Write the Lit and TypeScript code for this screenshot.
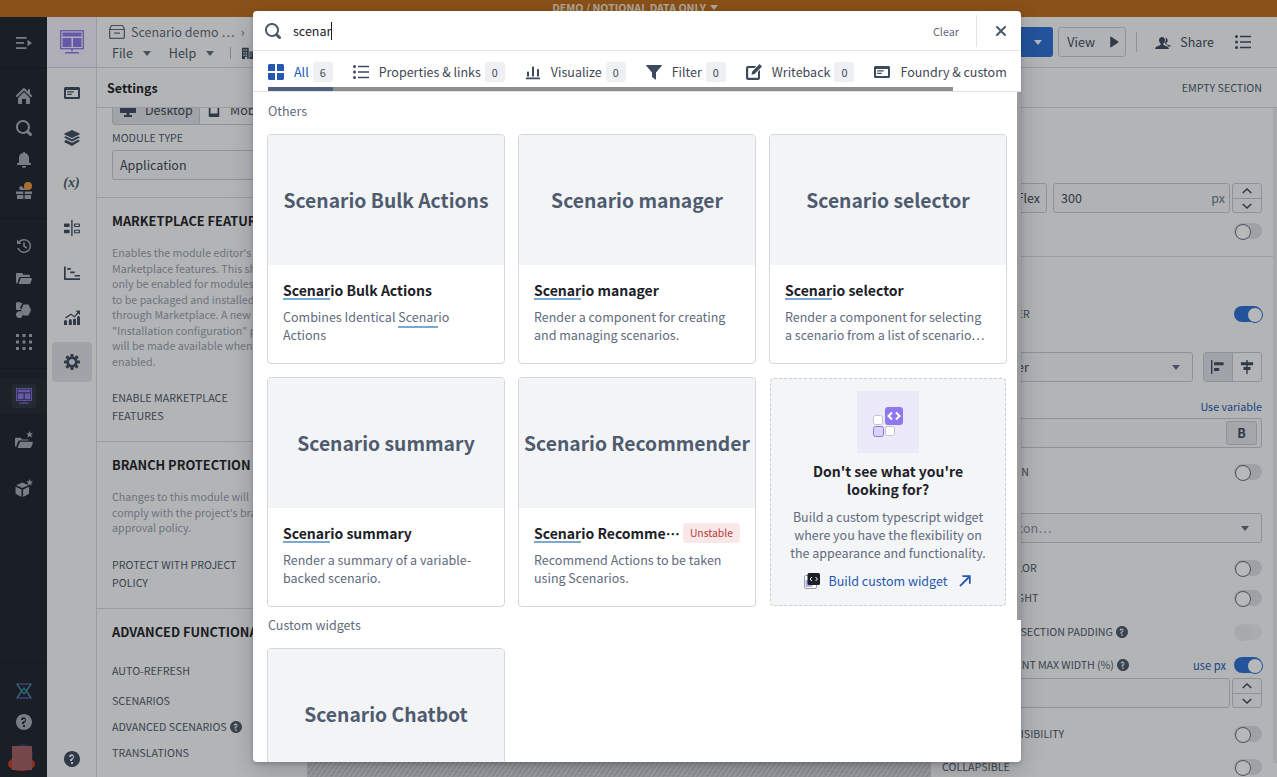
import { LitElement, html, css, nothing } from "lit";
import { customElement } from "lit/decorators.js";

const P: Record<string, string> = {
  search: "M15.55 13.43l-2.67-2.68a6.94 6.94 0 001.11-3.76c0-3.87-3.13-7-7-7s-7 3.13-7 7 3.13 7 7 7c1.39 0 2.68-.42 3.76-1.11l2.68 2.67a1.498 1.498 0 102.12-2.12zm-8.56-1.44c-2.76 0-5-2.24-5-5s2.24-5 5-5 5 2.24 5 5-2.24 5-5 5z",
  home: "M2 10v5c0 .55.45 1 1 1h3v-5h4v5h3c.55 0 1-.45 1-1v-5L8 4l-6 6zm13.71-2.71L14 5.58V2c0-.55-.45-1-1-1s-1 .45-1 1v1.58L8.71.29C8.53.11 8.28 0 8 0s-.53.11-.71.29l-7 7a1.003 1.003 0 001.42 1.42L8 2.41l6.29 6.29c.18.19.43.3.71.3a1.003 1.003 0 00.71-1.71z",
  bell: "M8 16c1.1 0 2-.9 2-2H6c0 1.1.9 2 2 2zm6-5c-.55 0-1-.45-1-1V6c0-2.43-1.73-4.45-4.02-4.9 0-.04.02-.06.02-.1 0-.55-.45-1-1-1S7 .45 7 1c0 .04.02.06.02.1A4.992 4.992 0 003 6v4c0 .55-.45 1-1 1s-1 .45-1 1 .45 1 1 1h12c.55 0 1-.45 1-1s-.45-1-1-1z",
  help: "M8 0C3.58 0 0 3.58 0 8s3.58 8 8 8 8-3.58 8-8-3.58-8-8-8zM7 13h2v-2H7v2zm1-10C6.34 3 5 4.34 5 6h2c0-.55.45-1 1-1s1 .45 1 1c0 .28-.11.53-.3.7L6.47 7.94c-.36.36-.47.86-.47 1.06v1h2V9.5c.02-.15.1-.3.2-.4l.97-.98c.45-.45.83-1.12.83-2.12 0-1.66-1.34-3-3-3z",
  cog: "M15.19 6.39h-1.85c-.11-.37-.27-.71-.45-1.04l1.36-1.36c.31-.31.31-.82 0-1.13l-1.13-1.13a.803.803 0 00-1.13 0l-1.36 1.36c-.33-.18-.67-.33-1.04-.44V.79c0-.44-.36-.8-.8-.8h-1.6c-.44 0-.8.36-.8.8v1.86c-.39.12-.75.28-1.1.47l-1.3-1.3c-.3-.3-.79-.3-1.09 0L1.82 2.91c-.3.3-.3.79 0 1.09l1.3 1.3c-.2.35-.36.71-.48 1.1H.8c-.44 0-.8.36-.8.8v1.6c0 .44.36.8.8.8h1.85c.11.37.27.71.45 1.04l-1.36 1.36c-.31.31-.31.82 0 1.13l1.13 1.13c.31.31.82.31 1.13 0l1.36-1.36c.33.18.67.33 1.04.44v1.86c0 .44.36.8.8.8h1.6c.44 0 .8-.36.8-.8v-1.86c.39-.12.75-.28 1.1-.47l1.3 1.3c.3.3.79.3 1.09 0l1.09-1.09c.3-.3.3-.79 0-1.09l-1.3-1.3c.19-.35.36-.71.48-1.1h1.85c.44 0 .8-.36.8-.8v-1.6a.816.816 0 00-.81-.8zm-7.2 4.6c-1.66 0-3-1.34-3-3s1.34-3 3-3 3 1.34 3 3-1.34 3-3 3z",
  allgrid: "M0 1.5C0 .7.7 0 1.5 0H7v7H0zM9 0h5.500c.8 0 1.500.7 1.500 1.500V7H9zM0 9h7v7H1.500C.7 16 0 15.300 0 14.500zm9 0h7v5.500c0 .8-.7 1.500-1.500 1.500H9z",
  list: "M1.500 1a1.500 1.500 0 110 3 1.500 1.500 0 010-3zm0 5.500a1.500 1.500 0 110 3 1.500 1.500 0 010-3zm0 5.500a1.500 1.500 0 110 3 1.500 1.500 0 010-3zM5 1.700h11v1.600H5zm0 5.500h11v1.600H5zm0 5.500h11v1.600H5z",
  bars: "M1 13.500h14v1.700H1zM2 8.500c0-.6.4-1 1-1s1 .4 1 1v4H2zM7 3.500c0-.6.4-1 1-1s1 .4 1 1v9H7zM12 6c0-.6.4-1 1-1s1 .4 1 1v6.500h-2z",
  filter: "M.5 1h15c.3 0 .5.5.3.8L10 8.500V15c0 .5-.5.6-.8.4l-3-2.400c-.1-.1-.2-.3-.2-.5V8.500L.2 1.800C0 1.500.2 1 .5 1z",
  edit: "M13.600 0L16 2.400 8.600 9.900l-3.200.8.8-3.200zM2 2h8.300L8.400 4H2.200v9.800H12V7.700l2-2V14a2 2 0 01-2 2H2a2 2 0 01-2-2V4a2 2 0 012-2z",
  panel: "M1.500 2h13c.8 0 1.500.7 1.500 1.500v9c0 .8-.7 1.500-1.500 1.500h-13C.7 14 0 13.300 0 12.500v-9C0 2.700.7 2 1.500 2zM2 5v7h12V5zm1.200 1.300h6.500v1.300H3.200zm0 2.400h4.500V10H3.200z",
  layers: "M8 0l7.500 3.600c.4.2.4.6 0 .8L8 8 .5 4.400c-.4-.2-.4-.6 0-.8zM1.800 6.300L8 9.300l6.200-3 1.300.7c.4.2.4.6 0 .8L8 11.400.5 7.800c-.4-.2-.4-.6 0-.8zm0 3.400L8 12.700l6.200-3 1.300.7c.4.2.4.6 0 .8L8 16 .5 12.200c-.4-.2-.4-.6 0-.8z",
  sliders: "M7.200 0h1.400v16H7.200zM.8 3.500h4c.5 0 .8.3.8.8v1.900c0 .5-.3.8-.8.8h-4c-.5 0-.8-.3-.8-.8V4.300c0-.5.3-.8.8-.8zm0 6.200h4c.5 0 .8.3.8.8v1.900c0 .5-.3.8-.8.8h-4c-.5 0-.8-.3-.8-.8v-1.900c0-.5.3-.8.8-.8zM11 3.500h4c.5 0 1 .4 1 1v1.600c0 .6-.5 1-1 1h-4c-.5 0-1-.4-1-1V4.500c0-.6.5-1 1-1zm.2 1.100v1.400h3.600V4.600zm-.2 5.100h4c.5 0 1 .4 1 1v1.600c0 .6-.5 1-1 1h-4c-.5 0-1-.4-1-1v-1.600c0-.6.5-1 1-1zm.2 1.100v1.400h3.600v-1.400z",
  gantt: "M0 1.500h1.700v11.800H16V15H1c-.6 0-1-.4-1-1zM3.200 3h3.600v1.800H3.200zm3 3.500h4.600v1.800H6.200zm4.500 3.400H16v1.700h-5.300z",
  growth: "M1.500 10A1.500 1.500 0 013 11.500V15H0v-3.500A1.500 1.500 0 011.500 10zm4.800-1a1.500 1.500 0 011.500 1.500V15h-3v-4.500A1.500 1.500 0 016.300 9zm8.200-3A1.500 1.500 0 0116 7.500V15h-3V7.500A1.500 1.500 0 0114.500 6zm-4 2.500A1.500 1.500 0 0112 10v5H9v-5a1.500 1.500 0 011.500-1.500zM16 .5V5l-1.500-1.500-4 4L7 5 2 8.500l-.8-1.200L7 3.500l3.400 2.400 2.900-3.400L11.700.8z",
  history: "M8 1a7 7 0 11-6.700 9h1.600A5.500 5.500 0 108 2.500a5.400 5.400 0 00-4.100 1.900L5.500 6H1V1.500l1.800 1.800A7 7 0 018 1zm-.8 3.500h1.600v3.200l2.500 1.900-1 1.200-3.100-2.400z",
  folder: "M1 3h5l1.500 1.800H13c.6 0 1 .4 1 1V7H4.300c-.6 0-1 .3-1.200.9l-1.900 5.700C.5 13.400 0 12.800 0 12V4c0-.6.4-1 1-1zm3.800 5H15c.7 0 1.100.6.9 1.200l-1.500 4.100c-.2.4-.5.7-1 .7H2.500z",
  cubes: "M4 .5a3.500 3.500 0 012.300.9L4 5.800l1.300 2.200H1A3.500 3.500 0 014 .5zM7.500 2.500h5l2.500 5.500-2.500 5.500h-5L5 8zM4 9.200h1.300L7 12.500l-1 2.600a3.500 3.500 0 11-2-5.900z",
  grid: "M0 0h3v3H0zm6.500 0h3v3h-3zM13 0h3v3h-3zM0 6.500h3v3H0zm6.500 0h3v3h-3zm6.500 0h3v3h-3zM0 13h3v3H0zm6.500 0h3v3h-3zM13 13h3v3h-3z",
  collapse: "M0 2h10.500v1.700H0zm0 5.100h8v1.700H0zm0 5.100h10.500v1.700H0zM11.500 4.800L16 8l-4.500 3.200z",
  share: "M9.800 11.500c-1.300-.5-1.500-1-1.500-1.500 0-.5.3-1 .7-1.300.7-.6 1-1.500 1-2.500 0-1.900-1.200-3.200-3-3.200s-3 1.400-3 3.200c0 1 .4 1.900 1 2.500.4.300.7.800.7 1.300 0 .5-.2 1-1.500 1.500C3 12 .2 12.800 0 15h14c-.2-2.200-3-3-4.200-3.500zm3-.7c-.6-.2-1.500-.9-1.500-1.300 0-.4.3-.7.6-1 .6-.5.9-1.200.9-2 0-1.500-1-2.600-2.400-2.800.6 1 .7 2.500-.1 4-.3.6-.6.9-.6 1.200 0 .8 2.400 1.500 3.800 3.600H16c0-1-1.300-1.300-3.200-1.700z",
  play: "M3 1.500c0-.6.7-1 1.200-.6l9.500 6.400c.4.3.4 1 0 1.300l-9.500 6.500c-.5.3-1.200 0-1.200-.6z",
  building: "M0 1h9v15H7v-3H4v3H0zm2 2v2h1.500V3zm3 0v2h1.500V3zM2 6.500v2h1.500v-2zm3 0v2h1.500v-2zM2 10v2h1.500v-2zm3 0v2h1.500v-2zM10 6h6v10h-6zm1.500 1.500v2h1.300v-2zm0 3.500v2h1.300v-2z",
  gift: "M0 7.500h7.300V10H0zm8.700 0H16V10H8.700zM1 11h6.300v4H1zm7.700 0H15v4H8.700zM4 2.500C5.500 1.500 7 2.800 8 5c1-2.200 2.500-3.500 4-2.500 1.300.9.900 2.800-.6 3.600H4.600C3.100 5.300 2.700 3.400 4 2.500z",
  folderstar: "M1 6h4l1.500 1.500H12v1H4c-.6 0-1 .3-1.200.8L1 14c-.6-.1-1-.6-1-1.200V7c0-.6.4-1 1-1zm3.500 3.500H15c.7 0 1 .6.8 1.200l-1.300 3.600c-.2.4-.5.7-1 .7H2.200zM13 0l.9 2 2.100.2-1.600 1.400.5 2.100L13 4.600l-1.900 1.100.5-2.100L10 2.200l2.100-.2z",
  cubestar: "M6.500 3L12 5.500 6.500 8.100 1 5.500zM.5 6.800l5.300 2.500V16L.5 13.200zm12 0v6.400L7.200 16V9.300zM13 0l.9 2 2.100.2-1.600 1.400.5 2.100L13 4.600l-1.900 1.100.5-2.100L10 2.200l2.100-.2z",
  appbox: "M2 1h12l2 4v8.500c0 .8-.7 1.500-1.500 1.500h-13C.7 15 0 14.300 0 13.500V5zm.8 1L1.400 5h13.200l-1.400-3zM1.300 6v7.700h13.400V6zM5 8.500h6v1.200H5z",
  monitor: "M1 0h14c.6 0 1 .4 1 1v9c0 .6-.4 1-1 1H9.500v2H12v2H4v-2h2.500v-2H1c-.6 0-1-.4-1-1V1c0-.6.4-1 1-1z",
  mobile: "M3.500 0h9c.8 0 1.500.7 1.500 1.500v13c0 .8-.7 1.500-1.500 1.500h-9C2.700 16 2 15.300 2 14.500v-13C2 .7 2.700 0 3.500 0zM4 2v10h8V2z",
  alignl: "M0 0h1.600v16H0zM3.500 2.500h10c.6 0 1 .4 1 1V5c0 .6-.4 1-1 1h-10zm0 6.500h5c.6 0 1 .4 1 1v1.500c0 .6-.4 1-1 1h-5z",
  alignc: "M7.200 0h1.600v2.500H15V6H8.800v2H12v3.500H8.800V16H7.200v-4.500H4V8h3.200V6H1V2.500h6.200z",
  cross: "M9.410 8l3.290-3.290A1 1 0 1011.290 3.300L8 6.590 4.710 3.300A1 1 0 103.300 4.710L6.590 8 3.300 11.290a1 1 0 101.410 1.410L8 9.410l3.290 3.290a1 1 0 001.410-1.410z",
  arrow: "M5 1.500h9.500V11h-2V5L3 14.500 1.500 13 11 3.500H5z",
  chevup: "M8 4.500l5.500 5.200-1.200 1.200L8 6.900l-4.300 4-1.200-1.200z",
  chevdown: "M8 11.500L2.500 6.300l1.200-1.200L8 9.100l4.300-4 1.200 1.200z",
};

const ic = (name: string, size = 16) =>
  html`<svg class="ic" viewBox="0 0 16 16" width=${size} height=${size} aria-hidden="true">
    <path fill-rule="evenodd" d=${P[name]}></path>
  </svg>`;

// l'icône "module" : écran violet à panneaux, utilisée dans les deux rails
const moduleIcon = (w: number, h: number) =>
  html`<svg viewBox="0 0 24 24" width=${w} height=${h} aria-hidden="true">
    <rect x="0.7" y="0.7" width="22.6" height="18" fill="none" stroke="#8a74e8" stroke-width="1.3"></rect>
    <rect x="2.5" y="2.5" width="19" height="4" fill="#8a74e8"></rect>
    <rect x="2.5" y="8" width="9" height="9" fill="#8a74e8"></rect>
    <rect x="13" y="8" width="8.5" height="9" fill="#8a74e8"></rect>
    <path d="M12 19v2.500M5 22.700h14" stroke="#8a74e8" stroke-width="1.5" fill="none"></path>
  </svg>`;

const caretDown = () => html`<span class="tri"></span>`;
const hl = (s: string) => html`<span class="hl">${s}</span>`;

type Card = { name: string; rest: string; desc: unknown; badge?: string };

const CARDS: Card[] = [
  { name: "Scenario Bulk Actions", rest: "io Bulk Actions", desc: html`Combines Identical <span class="hl-d">Scenar</span>io Actions` },
  { name: "Scenario manager", rest: "io manager", desc: "Render a component for creating and managing scenarios." },
  { name: "Scenario selector", rest: "io selector", desc: "Render a component for selecting a scenario from a list of scenario…" },
  { name: "Scenario summary", rest: "io summary", desc: "Render a summary of a variable-backed scenario." },
  { name: "Scenario Recommender", rest: "io Recommender", desc: "Recommend Actions to be taken using Scenarios.", badge: "Unstable" },
];

const TABS = [
  { label: "Properties & links", icon: "list", n: 0 },
  { label: "Visualize", icon: "bars", n: 0 },
  { label: "Filter", icon: "filter", n: 0 },
  { label: "Writeback", icon: "edit", n: 0 },
  { label: "Foundry & custom", icon: "panel", n: null },
];

@customElement("app-root")
export class AppRoot extends LitElement {
  static styles = css`
    :host {
      display: block;
      position: relative;
      width: 1277px;
      height: 777px;
      overflow: hidden;
      background: #f9fafb;
      color: #1c2127;
      font: 12.5px/18px "Noto Sans CJK SC", "Noto Sans", sans-serif;
    }
    * { box-sizing: border-box; }
    .ic { display: block; fill: currentColor; flex: none; }

    .banner {
      height: 17px;
      background: #bf6c19;
      color: #f6e5cf;
      font-size: 10.6px;
      font-weight: 600;
      line-height: 15px;
      display: flex;
      justify-content: center;
      align-items: flex-start;
      gap: 4px;
      padding-right: 7px;
    }
    .banner .tri { border-top-color: #f6e5cf; margin-top: 5px; }
    .tri {
      display: inline-block;
      width: 0;
      height: 0;
      border: 4px solid transparent;
      border-top: 5px solid #5f6b7c;
      border-bottom: 0;
      flex: none;
    }
    .page { display: flex; height: 760px; }

    /* rail sombre */
    .rail {
      width: 47px;
      flex: none;
      background: #1f252c;
      color: #a6acb5;
      display: flex;
      flex-direction: column;
      align-items: center;
    }
    .rail-top {
      height: 52px;
      width: 100%;
      display: flex;
      align-items: center;
      justify-content: center;
      border-bottom: 1px solid #181c21;
    }
    .rail-group {
      width: 100%;
      padding: 11px 0 10px;
      border-bottom: 1px solid #181c21;
    }
    .rail-item { height: 32px; display: flex; align-items: center; justify-content: center; position: relative; }
    .dot { position: absolute; left: 24px; top: 6px; width: 8px; height: 8px; border-radius: 50%; background: #e8973f; }
    .rail-active {
      width: 100%;
      height: 36px;
      margin-top: 9px;
      background: #232931;
      display: flex;
      align-items: center;
      justify-content: center;
    }
    .rail-active-box {
      width: 24px;
      height: 24px;
      border-radius: 4px;
      background: #2b3440;
      display: flex;
      align-items: center;
      justify-content: center;
    }
    .rail-fav { height: 32px; margin-top: 10px; display: flex; align-items: center; }
    .rail-fav + .rail-fav { margin-top: 16px; }
    .rail-bottom {
      margin-top: auto;
      width: 100%;
      border-top: 1px solid #181c21;
      padding-top: 20px;
      display: flex;
      flex-direction: column;
      align-items: center;
      gap: 15px;
    }
    .avatar { position: relative; width: 47px; height: 33px; overflow: hidden; margin-top: -1px; }
    .avatar i { position: absolute; display: block; }
    .av-top { left: 13px; top: 0; width: 20px; height: 20px; border-radius: 50%; background: #2a3d66; }
    .av-red { left: 8px; top: 13px; width: 27px; height: 14px; border-radius: 50%; background: #cb3a1c; }
    .av-sq { left: 12px; top: 2px; width: 20px; height: 24px; background: #a25f62; filter: blur(0.6px); }

    /* second rail */
    .rail2 {
      width: 50px;
      flex: none;
      border-right: 1px solid #d3d7de;
      display: flex;
      flex-direction: column;
      align-items: center;
      color: #3d4a5c;
    }
    .logo {
      width: 100%;
      height: 51px;
      background: #f5f1fb;
      border-bottom: 1px solid #d3d7de;
      display: flex;
      align-items: center;
      justify-content: center;
      flex: none;
    }
    .rail2-list { padding-top: 2px; width: 100%; display: flex; flex-direction: column; align-items: center; }
    .rail2-item { height: 45px; width: 40px; display: flex; align-items: center; justify-content: center; }
    .rail2-item.on { height: 40px; margin-top: 2px; background: #dfe1e5; border-radius: 4px; }
    .fx { font: italic 700 14px "Liberation Serif", serif; color: #4c586a; }
    .rail2-help { margin-top: auto; height: 36px; display: flex; align-items: center; }

    /* en-tête et colonnes */
    .main { flex: 1; min-width: 0; display: flex; flex-direction: column; }
    .top {
      height: 51px;
      flex: none;
      border-bottom: 1px solid #d3d7de;
      display: flex;
      justify-content: space-between;
      padding: 0 26px 0 12px;
    }
    .crumb { display: flex; align-items: center; gap: 6px; margin-top: 6px; color: #5f6b7c; }
    .menus { display: flex; align-items: center; margin: 2px 0 0 3px; color: #4c586a; height: 20px; }
    .menus .tri { margin: 0 18px 0 10px; }
    .menus .sep { width: 1px; height: 12px; background: #b9bec6; margin: 0 11px 0 -2px; }
    .menus .ic { color: #3d4a5c; }
    .actions { display: flex; align-items: center; gap: 5px; color: #3d4a5c; }
    .btn {
      height: 30px;
      display: flex;
      align-items: center;
      border: 1px solid #c6cad0;
      border-radius: 3px;
      background: #f6f7f9;
      padding: 0 8px;
    }
    .publish {
      width: 104px;
      height: 30px;
      background: #2b6fd4;
      border-radius: 3px;
      color: #fff;
      display: flex;
      align-items: center;
      justify-content: flex-end;
      padding-right: 11px;
    }
    .publish .tri { border-top-color: #fff; }
    .view { gap: 13px; width: 68px; }
    .vsep { width: 1px; height: 20px; background: #c6cad0; margin: 0 13px 0 5px; }
    .share { display: flex; align-items: center; gap: 9px; margin-right: 16px; }
    .cols { flex: 1; min-height: 0; display: flex; }

    /* panneau Settings */
    .settings {
      width: 211px;
      flex: none;
      border-right: 1px solid #d3d7de;
      display: flex;
      flex-direction: column;
      overflow: hidden;
    }
    .panel-head {
      height: 40px;
      flex: none;
      border-bottom: 1px solid #d3d7de;
      display: flex;
      align-items: center;
      padding: 0 10px;
      font-weight: 600;
      background: #f9fafb;
      position: relative;
    }
    .set-body { margin-top: -13px; white-space: nowrap; }
    .sec { padding: 0 15px; border-bottom: 1px solid #d3d7de; }
    .sec.s1 { height: 103px; }
    .sec.s2 { height: 244px; padding-top: 14px; }
    .sec.s3 { height: 167px; padding-top: 14px; }
    .s4 { padding: 14px 15px 0; }
    .seg { display: flex; height: 30px; width: 196px; }
    .seg div { display: flex; align-items: center; gap: 9px; padding-left: 7px; border: 1px solid #c6cad0; color: #404854; }
    .seg .ic { color: #3d4a5c; }
    .seg .on { width: 88px; background: #dfe1e5; border-radius: 3px 0 0 3px; }
    .seg .on + div { flex: 1; border-left: 0; }
    .lab { font-size: 10.7px; line-height: 18px; color: #4c586a; text-transform: uppercase; }
    .tight { letter-spacing: -0.1px; }
    .select {
      height: 30px;
      border: 1px solid #c6cad0;
      border-radius: 3px;
      background: #f6f7f9;
      display: flex;
      align-items: center;
      justify-content: space-between;
      padding: 0 12px 0 7px;
      color: #404854;
    }
    h3 { margin: 0; font-size: 12.8px; line-height: 18px; font-weight: 600; }
    .muted { margin-top: 15px; font-size: 10.7px; line-height: 15.5px; color: #969dab; }
    .q { display: inline-block; vertical-align: -2px; margin-left: 3px; color: #4c586a; }

    /* canevas hachuré */
    .canvas {
      flex: 1;
      min-width: 0;
      background: repeating-linear-gradient(-55deg, #dcdde0 0 2px, #c9cbcf 2px 4px);
    }

    /* panneau droit */
    .right {
      width: 347px;
      flex: none;
      border-left: 1px solid #d3d7de;
      position: relative;
      display: flex;
      flex-direction: column;
      overflow: hidden;
    }
    .right .panel-head { justify-content: flex-end; padding: 0 15px; font-size: 10.7px; font-weight: 400; color: #4c586a; }
    .rsb { position: absolute; right: 0; top: 40px; bottom: 14px; width: 4px; background: #e8e8e8; }
    .rsec { padding: 0 15px 0 11px; white-space: nowrap; }
    .rsec.first { height: 149px; border-bottom: 1px solid #d3d7de; padding-top: 54px; }
    .row { display: flex; align-items: center; justify-content: space-between; height: 16px; }
    .row .left { display: flex; align-items: center; }
    .row .aside { display: flex; align-items: center; gap: 8px; }
    .ctl { display: flex; height: 30px; gap: 6px; }
    .flexbtn { width: 105px; justify-content: flex-end; padding: 0 6px 0 0; color: #404854; }
    .field {
      flex: 1;
      height: 30px;
      border: 1px solid #c6cad0;
      border-radius: 3px;
      background: #f6f7f9;
      display: flex;
      align-items: center;
      justify-content: space-between;
      padding: 0 4px 0 7px;
      color: #404854;
      min-width: 0;
    }
    .field .px { color: #6b7686; }
    .stepper {
      width: 30px;
      flex: none;
      margin-left: -4px;
      border: 1px solid #c6cad0;
      border-radius: 3px;
      background: #f6f7f9;
      display: flex;
      flex-direction: column;
      color: #3d4a5c;
    }
    .stepper div { flex: 1; display: flex; align-items: center; justify-content: center; }
    .stepper div + div { border-top: 1px solid #c6cad0; }
    .mt3 { margin-top: 3px; }
    .mt4 { margin-top: 4px; }
    .mt5 { margin-top: 5px; }
    .mt8 { margin-top: 8px; }
    .mt9 { margin-top: 9px; }
    .mt10 { margin-top: 10px; }
    .mt12 { margin-top: 12px; }
    .mt14 { margin-top: 14px; }
    .mt16 { margin-top: 16px; }
    .mt17 { margin-top: 17px; }
    .mt18 { margin-top: 18px; }
    .mt20 { margin-top: 20px; }
    .mt21 { margin-top: 21px; }
    .mt30 { margin-top: 30px; }
    .mt49 { margin-top: 49px; }
    .grow { flex: 1; min-width: 0; }
    .rseg { width: 59px; margin-left: 4px; display: flex; border: 1px solid #c6cad0; border-radius: 3px; color: #3d4a5c; flex: none; }
    .rseg div { flex: 1; display: flex; align-items: center; justify-content: center; }
    .rseg .on { background: #dfe1e5; border-right: 1px solid #c6cad0; }
    .link { color: #2458b3; font-size: 10.8px; }
    .link.big { font-size: 11.2px; }
    .boldbtn {
      width: 31px;
      height: 24px;
      border: 1px solid #c6cad0;
      border-radius: 3px;
      background: #e4e6e9;
      display: flex;
      align-items: center;
      justify-content: center;
      font-weight: 700;
      color: #3d4a5c;
    }
    .ph { color: #8a93a1; }
    .toggle {
      width: 28px;
      height: 16px;
      border-radius: 8px;
      background: #dcdfe3;
      position: relative;
      flex: none;
    }
    .toggle::after {
      content: "";
      position: absolute;
      left: 1px;
      top: 1px;
      width: 14px;
      height: 14px;
      border-radius: 50%;
      background: #fff;
      border: 1px solid #5f6b7c;
    }
    .toggle.on { background: #2b6fd4; }
    .toggle.on::after { left: 13px; border-color: #2b6fd4; }
    .toggle.off::after { background: #e8eaec; border-color: #e8eaec; }
    .toggle.off { background: #eceef0; }

    /* voile + fenêtre de recherche */
    .scrim { position: absolute; inset: 0; background: rgba(17, 20, 24, 0.3); }
    .modal {
      position: absolute;
      left: 253px;
      top: 11px;
      width: 768px;
      height: 751px;
      background: #fff;
      border-radius: 4px;
      overflow: hidden;
      display: flex;
      flex-direction: column;
      box-shadow: 0 2px 4px rgba(17, 20, 24, 0.2), 0 8px 24px rgba(17, 20, 24, 0.2);
    }
    .searchbar {
      height: 40px;
      flex: none;
      border-bottom: 1px solid #e1e3e6;
      display: flex;
      align-items: center;
      padding: 0 12px;
      color: #4c586a;
    }
    .query { margin-left: 12px; color: #1c2127; flex: 1; display: flex; align-items: center; }
    .cursor { width: 1px; height: 18px; background: #1c2127; }
    .clear { font-size: 10.8px; color: #5f6b7c; margin-right: 17px; }
    .bar-sep { width: 1px; height: 32px; background: #e1e3e6; margin-right: 16px; }
    .tabs {
      height: 41px;
      flex: none;
      position: relative;
      border-bottom: 1px solid #e1e3e6;
      display: flex;
      align-items: flex-start;
      gap: 20px;
      padding: 11px 0 0 15px;
      overflow: hidden;
      white-space: nowrap;
      color: #404854;
    }
    .tab { display: flex; align-items: center; height: 20px; color: #3d4a5c; flex: none; }
    .tab .ic { margin-right: 10px; }
    .tab .t { color: #404854; }
    .tab.on .ic, .tab.on .t { color: #2458b3; }
    .count {
      width: 20px;
      height: 20px;
      margin-left: 4px;
      border-radius: 3px;
      background: #eef0f3;
      font-size: 10.8px;
      display: flex;
      align-items: center;
      justify-content: center;
      color: #404854;
    }
    .track { position: absolute; left: 15px; bottom: 0; width: 685px; height: 4px; background: #8e8e8e; }
    .thumb { width: 65px; height: 100%; background: #4f6080; }
    .content { flex: 1; min-height: 0; overflow: hidden; padding: 0 14px; position: relative; }
    .vthumb { position: absolute; right: 0; top: 0; width: 4px; height: 528px; background: #9a9a9a; }
    .group { color: #5f6b7c; line-height: 18px; padding: 10px 0 0 1px; margin-bottom: 14px; }
    .group.next { padding-top: 9px; }
    .grid { display: grid; grid-template-columns: repeat(3, 238px); grid-auto-rows: 230px; gap: 13px; }
    .card {
      border: 1px solid #d3d6da;
      border-radius: 4px;
      overflow: hidden;
      background: #fff;
      display: flex;
      flex-direction: column;
    }
    .thumbnail {
      height: 130px;
      flex: none;
      background: #f3f4f6;
      display: flex;
      align-items: center;
      justify-content: center;
      font-size: 19.3px;
      font-weight: 600;
      color: #4f5b6e;
      white-space: nowrap;
    }
    .body { padding: 15px 15px 0; min-width: 0; }
    .title-row { display: flex; align-items: center; gap: 3px; height: 20px; }
    .title {
      font-size: 14px;
      line-height: 20px;
      font-weight: 600;
      color: #1c2127;
      white-space: nowrap;
      overflow: hidden;
      text-overflow: ellipsis;
      min-width: 0;
    }
    .hl { display: inline-block; line-height: 20px; box-shadow: inset 0 -2px 0 #7ba8d0; }
    .hl-d { display: inline-block; line-height: 18px; box-shadow: 0 2px 0 #7ba8d0; }
    .desc {
      margin-top: 8px;
      line-height: 18px;
      color: #5f6b7c;
      display: -webkit-box;
      -webkit-line-clamp: 2;
      -webkit-box-orient: vertical;
      overflow: hidden;
      padding-bottom: 2px;
    }
    .badge {
      flex: none;
      height: 20px;
      padding: 0 7px;
      border-radius: 3px;
      background: #fae8e8;
      color: #b83a3a;
      font-size: 10.4px;
      display: flex;
      align-items: center;
    }
    .promo {
      border: 1px dashed #c9ccd1;
      border-radius: 4px;
      background: #f4f5f7;
      margin: 1px;
      display: flex;
      flex-direction: column;
      align-items: center;
      text-align: center;
      padding-top: 12px;
    }
    .promo-ic {
      width: 62px;
      height: 62px;
      border-radius: 2px;
      background: #ece9f8;
      display: flex;
      align-items: center;
      justify-content: center;
    }
    .promo h4 { margin: 9px 0 0; font-size: 14px; line-height: 18px; font-weight: 600; color: #1c2127; }
    .promo p { margin: 10px 0 0; line-height: 18px; color: #5f6b7c; }
    .promo a { margin-top: 10px; display: flex; align-items: center; color: #2458b3; }
    .promo a svg:first-child { margin-right: 9px; }
    .promo a .ic { margin-left: 11px; }
  `;

  private renderCard(c: Card) {
    return html`<div class="card">
      <div class="thumbnail">${c.name}</div>
      <div class="body">
        <div class="title-row">
          <div class="title">${hl("Scenar")}${c.rest}</div>
          ${c.badge ? html`<span class="badge">${c.badge}</span>` : nothing}
        </div>
        <div class="desc">${c.desc}</div>
      </div>
    </div>`;
  }

  private renderRail() {
    const g1 = ["home", "search", "bell"];
    const g2 = ["history", "folder", "cubes", "grid"];
    return html`<nav class="rail">
      <div class="rail-top">${ic("collapse")}</div>
      <div class="rail-group">
        ${g1.map((n) => html`<div class="rail-item">${ic(n)}</div>`)}
        <div class="rail-item">${ic("gift")}<span class="dot"></span></div>
      </div>
      <div class="rail-group">${g2.map((n) => html`<div class="rail-item">${ic(n)}</div>`)}</div>
      <div class="rail-active"><div class="rail-active-box">${moduleIcon(16, 16)}</div></div>
      <div class="rail-fav">${ic("folderstar", 18)}</div>
      <div class="rail-fav">${ic("cubestar", 18)}</div>
      <div class="rail-bottom">
        <svg viewBox="0 0 16 16" width="16" height="16" fill="none" stroke-width="1.1">
          <path d="M1 1h14L10.500 8 15 15H1l4.500-7z" stroke="#7a5fd0"></path>
          <path d="M1 15L8 5l7 10M1 1l7 10 7-10" stroke="#2fa0a8"></path>
        </svg>
        ${ic("help")}
        <div class="avatar"><i class="av-top"></i><i class="av-red"></i><i class="av-sq"></i></div>
      </div>
    </nav>`;
  }

  private renderRail2() {
    return html`<nav class="rail2">
      <div class="logo">${moduleIcon(24, 24)}</div>
      <div class="rail2-list">
        <div class="rail2-item">${ic("panel")}</div>
        <div class="rail2-item">${ic("layers")}</div>
        <div class="rail2-item"><span class="fx">(x)</span></div>
        <div class="rail2-item">${ic("sliders")}</div>
        <div class="rail2-item">${ic("gantt")}</div>
        <div class="rail2-item">${ic("growth")}</div>
        <div class="rail2-item on">${ic("cog")}</div>
      </div>
      <div class="rail2-help">${ic("help")}</div>
    </nav>`;
  }

  private renderSettings() {
    return html`<section class="settings">
      <div class="panel-head">Settings</div>
      <div class="set-body">
        <div class="sec s1">
          <div class="seg">
            <div class="on">${ic("monitor")}Desktop</div>
            <div>${ic("mobile", 14)}Mobile</div>
          </div>
          <div class="lab mt4">Module type</div>
          <div class="select mt3">Application ${caretDown()}</div>
        </div>
        <div class="sec s2">
          <h3>MARKETPLACE FEATURES</h3>
          <div class="muted">
            Enables the module editor's<br />Marketplace features. This should<br />only be enabled for modules that are<br />to be packaged and installed<br />through Marketplace. A new<br />"Installation configuration" panel<br />will be made available when<br />enabled.
          </div>
          <div class="lab mt20">Enable Marketplace<br />features</div>
        </div>
        <div class="sec s3">
          <h3>BRANCH PROTECTION</h3>
          <div class="muted">Changes to this module will<br />comply with the project's branch<br />approval policy.</div>
          <div class="lab mt20">Protect with project<br />policy</div>
        </div>
        <div class="s4">
          <h3>ADVANCED FUNCTIONALITY</h3>
          <div class="lab mt21">Auto-refresh</div>
          <div class="lab mt12">Scenarios</div>
          <div class="lab mt8">Advanced scenarios<span class="q">${ic("help", 12)}</span></div>
          <div class="lab mt8">Translations</div>
        </div>
      </div>
    </section>`;
  }

  private toggle(kind = "") {
    return html`<span class="toggle ${kind}"></span>`;
  }

  private stepper() {
    return html`<div class="stepper"><div>${ic("chevup", 14)}</div><div>${ic("chevdown", 14)}</div></div>`;
  }

  private renderRight() {
    return html`<section class="right">
      <div class="panel-head">EMPTY SECTION</div>
      <div class="rsec first">
        <div class="row lab">Width (px)</div>
        <div class="ctl mt5">
          <div class="btn flexbtn">Flex</div>
          <div class="field">300 <span class="px">px</span></div>
          ${this.stepper()}
        </div>
        <div class="row mt10"><span></span>${this.toggle()}</div>
      </div>
      <div class="rsec">
        <div class="row lab mt49"><span>Section header</span>${this.toggle("on")}</div>
        <div class="ctl mt30">
          <div class="select grow">Sticky header ${caretDown()}</div>
          <div class="rseg"><div class="on">${ic("alignl", 14)}</div><div>${ic("alignc", 14)}</div></div>
        </div>
        <div class="row mt16"><span class="lab">Title</span><span class="link">Use variable</span></div>
        <div class="field mt4">Title <span class="boldbtn">B</span></div>
        <div class="row lab mt16"><span>Collapsed icon</span>${this.toggle()}</div>
        <div class="row lab mt9">Icon</div>
        <div class="select mt8"><span class="ph">Select one icon…</span>${caretDown()}</div>
        <div class="row lab mt17"><span>Header bg color</span>${this.toggle()}</div>
        <div class="row lab mt14"><span>Fixed row height</span>${this.toggle()}</div>
        <div class="row lab mt18">
          <span class="left">Remove inner section padding<span class="q">${ic("help", 12)}</span></span>${this.toggle("off")}
        </div>
        <div class="row mt17">
          <span class="left lab tight">Module content max width (%)<span class="q">${ic("help", 12)}</span></span>
          <span class="aside"><span class="link big">use px</span>${this.toggle("on")}</span>
        </div>
        <div class="ctl mt5"><div class="field"></div>${this.stepper()}</div>
        <div class="row lab mt18"><span>Conditional visibility</span>${this.toggle()}</div>
        <div class="row lab mt17"><span>Collapsible</span>${this.toggle()}</div>
      </div>
      <div class="rsb"></div>
    </section>`;
  }

  private renderModal() {
    return html`<div class="modal">
      <div class="searchbar">
        ${ic("search")}
        <div class="query">scenar<span class="cursor"></span></div>
        <span class="clear">Clear</span>
        <span class="bar-sep"></span>
        ${ic("cross")}
      </div>
      <div class="tabs">
        <div class="tab on">${ic("allgrid")}<span class="t">All</span><span class="count">6</span></div>
        ${TABS.map(
          (t) => html`<div class="tab">
            ${ic(t.icon)}<span class="t">${t.label}</span>
            ${t.n !== null ? html`<span class="count">${t.n}</span>` : nothing}
          </div>`,
        )}
        <div class="track"><div class="thumb"></div></div>
      </div>
      <div class="content">
        <div class="group">Others</div>
        <div class="grid">
          ${CARDS.map((c) => this.renderCard(c))}
          <div class="promo">
            <div class="promo-ic">
              <svg viewBox="0 0 30 30" width="30" height="30" fill="none">
                <rect x="0.5" y="8.500" width="9" height="9" rx="2" fill="#fff" stroke="#c4c4c8"></rect>
                <rect x="0.5" y="19.500" width="10" height="10" rx="2" fill="#d9d2fa" stroke="#8f78ee"></rect>
                <rect x="12.500" y="19.500" width="9" height="9" rx="2" fill="#fff" stroke="#c4c4c8"></rect>
                <rect x="12" y="0" width="18" height="18" rx="3" fill="#8f78ee"></rect>
                <path d="M19 5.500L15.500 9l3.500 3.500M23 5.500L26.500 9 23 12.500" stroke="#fff" stroke-width="2"></path>
              </svg>
            </div>
            <h4>Don't see what you're<br />looking for?</h4>
            <p>Build a custom typescript widget<br />where you have the flexibility on<br />the appearance and functionality.</p>
            <a>
              <svg viewBox="0 0 16 16" width="16" height="16" fill="none">
                <rect x="0.5" y="2.500" width="12" height="13" rx="1.5" fill="#fff" stroke="#9a9ea6"></rect>
                <rect x="1.5" y="7" width="7" height="7" fill="#b9a9f2"></rect>
                <rect x="3.5" y="0" width="12.500" height="12" rx="1.5" fill="#1c2127"></rect>
                <path d="M8 4L6 6l2 2M11.500 4l2 2-2 2" stroke="#fff" stroke-width="1"></path>
              </svg>
              Build custom widget ${ic("arrow", 14)}
            </a>
          </div>
        </div>
        <div class="group next">Custom widgets</div>
        <div class="grid">${this.renderCard({ name: "Scenario Chatbot", rest: "io Chatbot", desc: "" })}</div>
        <div class="vthumb"></div>
      </div>
    </div>`;
  }

  protected render() {
    return html`
      <div class="banner">DEMO / NOTIONAL DATA ONLY ${caretDown()}</div>
      <div class="page">
        ${this.renderRail()} ${this.renderRail2()}
        <div class="main">
          <header class="top">
            <div>
              <div class="crumb">${ic("appbox")}<span>Scenario demo …</span><span>›</span></div>
              <div class="menus">
                File ${caretDown()} Help ${caretDown()}<span class="sep"></span>${ic("building", 12)}
              </div>
            </div>
            <div class="actions">
              <div class="publish">${caretDown()}</div>
              <div class="btn view">View ${ic("play", 12)}</div>
              <span class="vsep"></span>
              <div class="share">${ic("share")}<span>Share</span></div>
              ${ic("list")}
            </div>
          </header>
          <div class="cols">${this.renderSettings()}<div class="canvas"></div>${this.renderRight()}</div>
        </div>
      </div>
      <div class="scrim"></div>
      ${this.renderModal()}
    `;
  }
}
